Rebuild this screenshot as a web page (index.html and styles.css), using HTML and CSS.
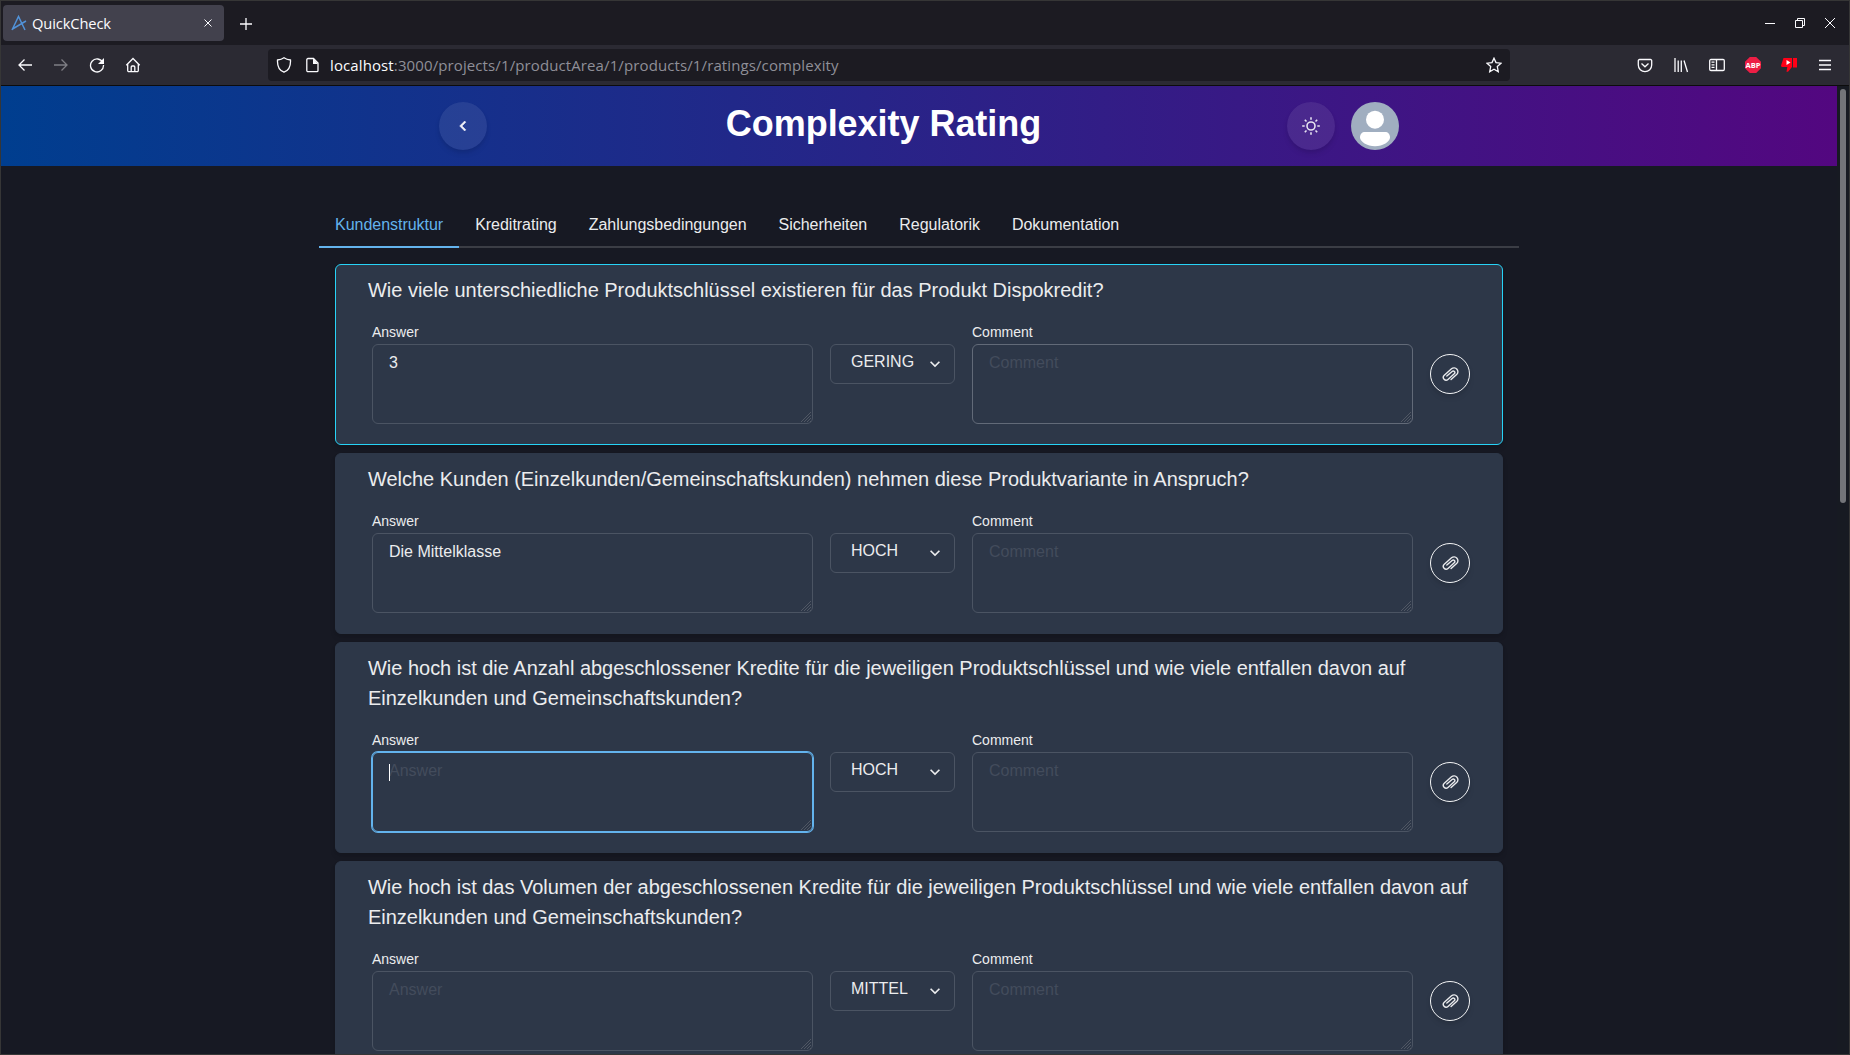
FILE: index.html
```
<!DOCTYPE html>
<html lang="de">
<head>
<meta charset="utf-8">
<title>QuickCheck</title>
<link rel="stylesheet" href="styles.css">
</head>
<body>
<svg class="defs" width="0" height="0">
  <symbol id="clip" viewBox="0 0 16 16"><path d="M4.6 9.6 8.9 4.6a1.5 1.5 0 0 1 2.3 2L6.1 12.6a2.6 2.6 0 0 1-4-3.4L8 2.3a3.6 3.6 0 0 1 5.500 4.700L9 12.300" transform="rotate(8 8 8) translate(.2 .3)"/></symbol>
  <symbol id="chev" viewBox="0 0 24 24"><path d="M16.59 8.59 12 13.17 7.41 8.59 6 10l6 6 6-6z"/></symbol>
  <symbol id="grip" viewBox="0 0 12 12"><path d="M1 11 11 1M4 11l7-7M7 11l4-4M10 11l1-1"/></symbol>
</svg>
<div class="window">
  <div class="tabbar">
    <div class="browser-tab">
      <svg class="favicon" viewBox="0 0 16 16"><path d="M1 15 7.500 1.500 14 15M1.500 14 15 6"/></svg>
      <span class="tab-title">QuickCheck</span>
      <svg class="tab-close" viewBox="0 0 8 8"><path d="m.5.5 7 7m0-7-7 7"/></svg>
    </div>
    <svg class="plus" viewBox="0 0 12 12"><path d="M6 0v12M0 6h12"/></svg>
    <div class="controls">
      <svg viewBox="0 0 10 10"><path d="M0 5.500h10"/></svg>
      <svg viewBox="0 0 10 10"><path d="M.5 2.500h7v7h-7zM2.500 2V.5h7v7H8"/></svg>
      <svg viewBox="0 0 10 10"><path d="m0 0 10 10M10 0 0 10"/></svg>
    </div>
  </div>
  <div class="toolbar">
    <div class="nav">
      <svg viewBox="0 0 16 16"><path d="M15 8H2M7.500 2.500 2 8l5.500 5.500"/></svg>
      <svg class="off" viewBox="0 0 16 16"><path d="M1 8h13M8.500 2.500 14 8l-5.500 5.500"/></svg>
      <svg viewBox="0 0 16 16"><path d="M13.800 5.500A6.500 6.500 0 1 0 14.500 8"/><path class="solid" d="M15 1v6H9z"/></svg>
      <svg viewBox="0 0 16 16"><path d="M1.300 8.300 8 1.500l6.700 6.800M2.700 7v6.500a1.200 1.200 0 0 0 1.200 1.200h8.200a1.200 1.200 0 0 0 1.200-1.200V7M6.200 14.500V10a1 1 0 0 1 1-1h1.600a1 1 0 0 1 1 1v4.500"/></svg>
    </div>
    <div class="urlbar">
      <svg viewBox="0 0 16 16"><path d="M8 .8c2 1.500 4 2 6.500 2.200.3 6-1.700 10.500-6.500 12.200C3.200 13.500 1.200 9 1.500 3 4 2.800 6 2.300 8 .8z"/></svg>
      <svg viewBox="0 0 16 16"><path d="M4 1.500h5.500l4.500 4.500v7.500a1.200 1.200 0 0 1-1.200 1.200H4a1.200 1.200 0 0 1-1.200-1.200V2.700A1.200 1.200 0 0 1 4 1.500z"/><path class="solid" d="M9 1v6h5z"/></svg>
      <span class="url"><b>localhost</b>:3000/projects/1/productArea/1/products/1/ratings/complexity</span>
      <svg class="star" viewBox="0 0 16 16"><path d="m8 1.200 2 4.400 5 .6-3.700 3.300 1 5.200L8 12.300l-4.300 2.400 1-5.200L1 6.200l5-.6z"/></svg>
    </div>
    <div class="extensions">
      <svg viewBox="0 0 16 16"><path d="M2.500 2.500h11A1.200 1.200 0 0 1 14.700 3.700V8A6.700 6.700 0 0 1 1.300 8V3.700A1.200 1.200 0 0 1 2.500 2.500zM4.500 6.500 8 9.800l3.500-3.300"/></svg>
      <svg viewBox="0 0 16 16"><path d="M2 1v14M5.200 3.500V15M8.300 3.500V15M11 3.500 14.500 15"/></svg>
      <svg viewBox="0 0 16 16"><path d="M2 2.500h12a1.300 1.300 0 0 1 1.300 1.300v8.400a1.300 1.300 0 0 1-1.300 1.300H2A1.300 1.300 0 0 1 .7 12.200V3.800A1.300 1.300 0 0 1 2 2.500zM7.500 2.500v11M2.500 5.200h3M2.500 7.800h3M2.500 10.400h3"/></svg>
      <span class="abp">ABP</span>
      <svg class="thumb" viewBox="0 0 16 16"><path d="M2.500 1H11v9L7 14.800H5.500L6.300 10H1.500A1.500 1.500 0 0 1 0 8.500zM12 1h4v9.500h-4z"/><path class="play" d="M5.500 3v5l4-2.500z"/></svg>
      <svg viewBox="0 0 16 16"><path d="M2 3.500h12M2 8h12M2 12.500h12"/></svg>
    </div>
  </div>
  <div class="viewport">
    <div class="page">
      <header class="header">
        <div class="header-inner">
          <button class="round"><svg class="back" viewBox="0 0 24 24"><path d="M15.410 7.410 14 6l-6 6 6 6 1.410-1.410L10.830 12z"/></svg></button>
          <h1>Complexity Rating</h1>
          <div class="header-actions">
            <button class="round"><svg class="sun" viewBox="0 0 18 18"><circle cx="9" cy="9" r="4"/><path d="M9 .2v2.500M9 15.300v2.500M.2 9h2.500M15.300 9h2.500M2.800 2.800l1.700 1.700M13.500 13.500l1.700 1.700M15.200 2.800l-1.700 1.700M4.500 13.500l-1.700 1.700"/></svg></button>
            <svg class="avatar" viewBox="0 0 48 48"><circle class="avatar-bg" cx="24" cy="24" r="24"/><circle cx="24" cy="17.700" r="9"/><path d="M14 30h20c3 0 5 2 5 5.500 0 4-7 8.800-15 8.800S9 39.500 9 35.500C9 32 11 30 14 30z"/></svg>
          </div>
        </div>
      </header>
      <main class="content">
        <nav class="tabs">
          <a class="tab active">Kundenstruktur</a><a class="tab">Kreditrating</a><a class="tab">Zahlungsbedingungen</a><a class="tab">Sicherheiten</a><a class="tab">Regulatorik</a><a class="tab">Dokumentation</a>
        </nav>
        <div class="cards">
          <section class="card selected">
            <h2>Wie viele unterschiedliche Produktschlüssel existieren für das Produkt Dispokredit?</h2>
            <div class="row">
              <div class="field"><label>Answer</label><div class="area">3<svg class="grip"><use href="#grip"/></svg></div></div>
              <div class="select">GERING<svg><use href="#chev"/></svg></div>
              <div class="field"><label>Comment</label><div class="area empty hover">Comment<svg class="grip"><use href="#grip"/></svg></div></div>
              <button class="attach"><svg><use href="#clip"/></svg></button>
            </div>
          </section>
          <section class="card">
            <h2>Welche Kunden (Einzelkunden/Gemeinschaftskunden) nehmen diese Produktvariante in Anspruch?</h2>
            <div class="row">
              <div class="field"><label>Answer</label><div class="area">Die Mittelklasse<svg class="grip"><use href="#grip"/></svg></div></div>
              <div class="select">HOCH<svg><use href="#chev"/></svg></div>
              <div class="field"><label>Comment</label><div class="area empty">Comment<svg class="grip"><use href="#grip"/></svg></div></div>
              <button class="attach"><svg><use href="#clip"/></svg></button>
            </div>
          </section>
          <section class="card">
            <h2>Wie hoch ist die Anzahl abgeschlossener Kredite für die jeweiligen Produktschlüssel und wie viele entfallen davon auf<br>Einzelkunden und Gemeinschaftskunden?</h2>
            <div class="row">
              <div class="field"><label>Answer</label><div class="area empty focus"><i class="caret"></i>Answer<svg class="grip"><use href="#grip"/></svg></div></div>
              <div class="select">HOCH<svg><use href="#chev"/></svg></div>
              <div class="field"><label>Comment</label><div class="area empty">Comment<svg class="grip"><use href="#grip"/></svg></div></div>
              <button class="attach"><svg><use href="#clip"/></svg></button>
            </div>
          </section>
          <section class="card">
            <h2>Wie hoch ist das Volumen der abgeschlossenen Kredite für die jeweiligen Produktschlüssel und wie viele entfallen davon auf<br>Einzelkunden und Gemeinschaftskunden?</h2>
            <div class="row">
              <div class="field"><label>Answer</label><div class="area empty">Answer<svg class="grip"><use href="#grip"/></svg></div></div>
              <div class="select">MITTEL<svg><use href="#chev"/></svg></div>
              <div class="field"><label>Comment</label><div class="area empty">Comment<svg class="grip"><use href="#grip"/></svg></div></div>
              <button class="attach"><svg><use href="#clip"/></svg></button>
            </div>
          </section>
        </div>
      </main>
    </div>
    <div class="scrollbar"><div class="thumb-bar"></div></div>
  </div>
</div>
</body>
</html>
```
FILE: styles.css
```
* { box-sizing: border-box; }
body { margin: 0; background: #171923; font-family: "Liberation Sans", Arial, sans-serif; color: #ebecee; }
svg { display: block; flex: none; }
button { padding: 0; border: 0; background: none; }
.defs { position: absolute; }

.window { display: flex; flex-direction: column; width: 1850px; height: 1055px; border: 1px solid #363636; overflow: hidden; }

.tabbar { display: flex; align-items: flex-start; height: 44px; flex: none; background: #1c1b22; }
.tabbar svg, .toolbar svg { fill: none; stroke: #fbfbfe; stroke-width: 1.3; }
.toolbar svg .solid { fill: #fbfbfe; stroke: none; }
.browser-tab { display: flex; align-items: center; width: 221px; height: 36px; margin: 4px 0 0 2px; padding: 0 12px 0 8px; border-radius: 4px; background: #42414d; }
.tabbar .favicon { width: 16px; height: 16px; stroke: #5192d8; stroke-width: 1.5; }
.tab-title { flex: 1; margin: 0 0 1px 5px; font: 14.7px/20px "Open Sans", "Noto Sans", sans-serif; letter-spacing: -.12px; color: #fbfbfe; }
.tab-close { width: 8px; height: 8px; }
.tabbar .tab-close { stroke-width: 1; }
.tabbar .plus { width: 12px; height: 12px; margin: 17px 0 0 16px; stroke-width: 1.3; }
.controls { display: flex; gap: 20px; margin: 17px 14px 0 auto; }
.controls svg { width: 10px; height: 10px; stroke-width: 1; }

.toolbar { display: flex; align-items: center; height: 41px; flex: none; background: #2b2a33; border-bottom: 1px solid #0c0c0d; }
.toolbar svg { width: 16px; height: 16px; }
.nav { display: flex; gap: 20px; padding-left: 16px; }
.toolbar .off { opacity: .4; }
.urlbar { display: flex; align-items: center; width: 1242px; height: 32px; margin-left: 127px; padding: 0 8px; border-radius: 4px; background: #1c1b22; }
.urlbar svg + svg { margin-left: 12px; }
.url { flex: 1; margin-left: 10px; font: 15px/20px "Open Sans", "Noto Sans", sans-serif; letter-spacing: .11px; color: #8f8f98; white-space: nowrap; }
.url b { font-weight: 400; color: #fbfbfe; }
.extensions { display: flex; align-items: center; gap: 20px; margin: 0 16px 0 auto; }
.abp { display: flex; justify-content: center; width: 16px; height: 16px; background: #ed1e45; clip-path: polygon(30% 0, 70% 0, 100% 30%, 100% 70%, 70% 100%, 30% 100%, 0 70%, 0 30%); font: 700 7.5px/16px "Open Sans", sans-serif; color: #fff; }
.toolbar .thumb { fill: #ff0017; stroke: none; }
.thumb .play { fill: #fff; }

.viewport { display: flex; flex: 1; min-height: 0; }
.page { width: 1836px; overflow: hidden; }
.scrollbar { flex: 1; padding: 3px 3px 0; background: #171a22; }
.thumb-bar { width: 6px; height: 414px; border-radius: 3px; background: #737479; }

.header { height: 80px; background: linear-gradient(to right, #003e8f, #530780); }
.header-inner { display: flex; align-items: center; justify-content: space-between; width: 960px; height: 80px; margin: 0 auto; }
.round { display: flex; align-items: center; justify-content: center; width: 48px; height: 48px; border-radius: 50%; background: rgba(255,255,255,.08); box-shadow: 0 4px 6px -1px rgba(0,0,0,.1), 0 2px 4px -1px rgba(0,0,0,.06); }
.back { width: 20px; height: 20px; fill: #f2f3f8; stroke: #f2f3f8; stroke-width: .6; }
.sun { width: 18px; height: 18px; fill: none; stroke: #e6e3f0; stroke-width: 1.6; }
h1 { margin: 0 0 5px -7px; font-size: 36px; line-height: 44px; font-weight: 700; letter-spacing: -.04px; color: #fff; }
.header-actions { display: flex; gap: 16px; }
.avatar { width: 48px; height: 48px; fill: #fff; }
.avatar-bg { fill: #a0aec0; }

.content { width: 1200px; margin: 0 auto; padding-top: 36px; }
.tabs { display: flex; height: 46px; border-bottom: 2px solid #3b3d45; }
.tab { height: 46px; padding: 11px 16px 0; border-bottom: 2px solid transparent; font-size: 16px; line-height: 24px; letter-spacing: -.025px; white-space: nowrap; }
.tab.active { border-color: #63b3ed; color: #63b3ed; }

.cards { display: flex; flex-direction: column; gap: 8px; padding: 16px; }
.card { padding: 10px 32px 20px; border: 1px solid #2d3748; border-radius: 6px; background: #2d3748; box-shadow: 0 4px 6px -1px rgba(0,0,0,.1), 0 2px 4px -1px rgba(0,0,0,.06); }
.card.selected { border-color: #27d3f7; }
h2 { margin: 0 0 19px; font-size: 20px; line-height: 30px; font-weight: 400; letter-spacing: -.018px; white-space: nowrap; }
.row { display: grid; grid-template-columns: 441px 125px 441px 40px; column-gap: 17px; align-items: start; padding-left: 4px; }
label { display: block; height: 20px; font-size: 14px; line-height: 17px; }
.area { position: relative; height: 80px; padding: 7px 16px; border: 1px solid #4b5463; border-radius: 6px; font-size: 16px; line-height: 22px; }
.area.empty { color: #434c5c; }
.area.hover { border-color: #626a78; }
.area.focus { border-color: #63b3ed; box-shadow: 0 0 0 1px #63b3ed; }
.grip { position: absolute; right: 0; bottom: 0; width: 12px; height: 12px; fill: none; stroke: #59606c; stroke-width: .8; }
.caret { position: absolute; left: 16px; top: 11px; width: 1px; height: 17px; background: #fff; }
.select { display: flex; justify-content: space-between; height: 40px; margin-top: 20px; padding: 6px 9px 0 20px; border: 1px solid #4b5463; border-radius: 6px; font-size: 16px; line-height: 22px; }
.select svg { width: 20px; height: 20px; margin-top: 3px; fill: #ebecee; }
.attach { display: flex; align-items: center; justify-content: center; width: 40px; height: 40px; margin-top: 30px; border: 1px solid #f4f5f6; border-radius: 50%; box-shadow: 0 4px 6px -1px rgba(0,0,0,.1), 0 2px 4px -1px rgba(0,0,0,.06); }
.attach svg { width: 17px; height: 17px; fill: none; stroke: #ebecee; stroke-width: 1.3; stroke-linecap: round; }
```
